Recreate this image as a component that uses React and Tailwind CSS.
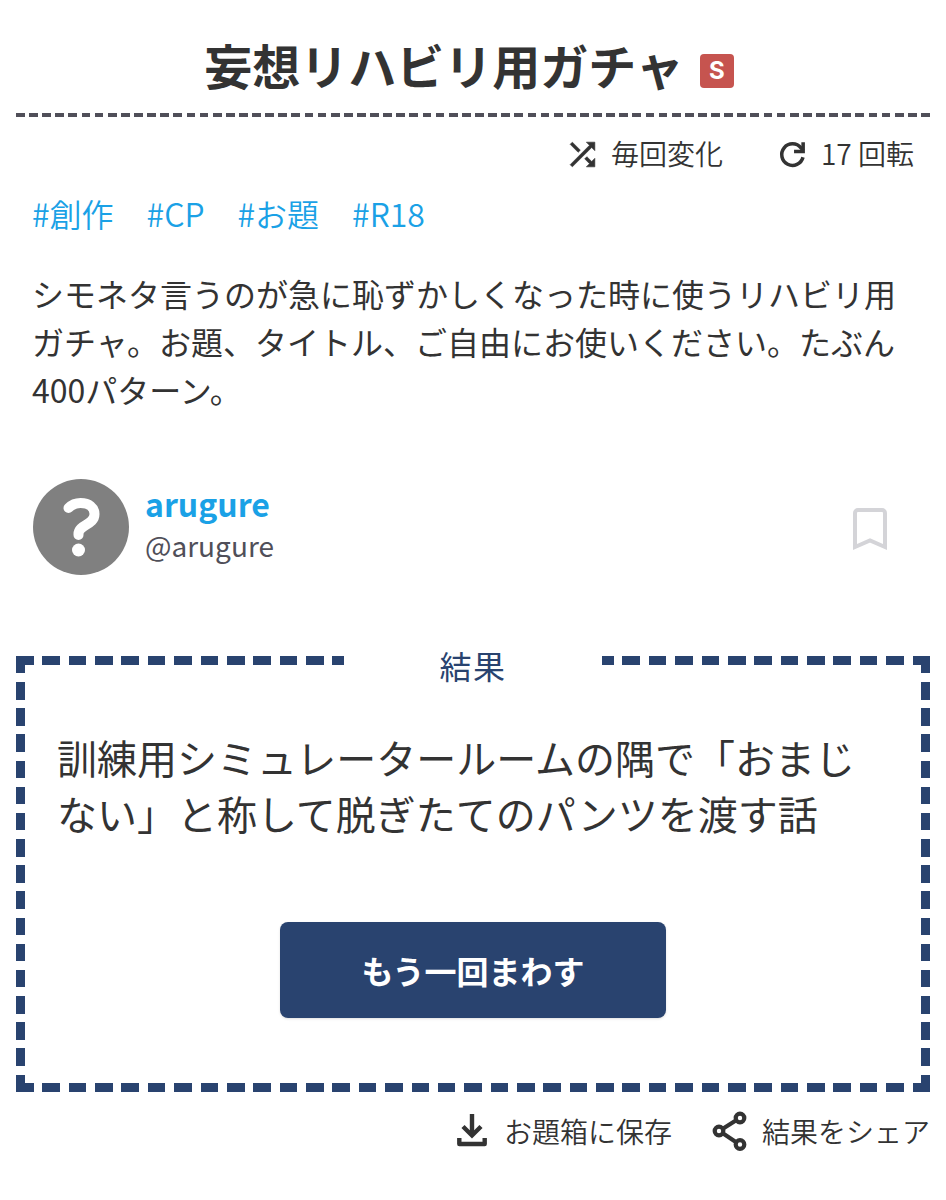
const tags = ["創作", "CP", "お題", "R18"];

const description =
  "シモネタ言うのが急に恥ずかしくなった時に使うリハビリ用ガチャ。お題、タイトル、ご自由にお使いください。たぶん400パターン。";

const result =
  "訓練用シミュレータールームの隅で「おまじない」と称して脱ぎたてのパンツを渡す話";

function ShuffleIcon() {
  return (
    <svg
      viewBox="0 0 24 24"
      className="mt-[3px] size-[37px]"
      fill="currentColor"
      stroke="currentColor"
      strokeWidth="0.4"
      aria-hidden="true"
    >
      <path d="M10.59 9.17 5.41 4 4 5.41l5.17 5.17 1.42-1.41zM14.5 4l2.04 2.04L4 18.59 5.41 20 17.96 7.46 20 9.5V4h-5.5zm.33 9.41-1.41 1.41 3.13 3.13L14.5 20H20v-5.5l-2.04 2.04-3.13-3.13z" />
    </svg>
  );
}

function RefreshIcon() {
  return (
    <svg
      viewBox="0 0 24 24"
      className="mt-[3px] size-[37px]"
      fill="none"
      stroke="currentColor"
      strokeWidth="2.3"
      aria-hidden="true"
    >
      <path d="M18.8 13.8A7 7 0 1 1 17.5 7.7L19 9.5" />
      <path d="M18.9 4V10.1H13" />
    </svg>
  );
}

function DownloadIcon() {
  return (
    <svg
      viewBox="0 0 32 40"
      className="h-10 w-8"
      fill="none"
      stroke="currentColor"
      strokeWidth="4.4"
      aria-hidden="true"
    >
      <path d="M16 3V25M7 15.5 16 24.5l9-9" />
      <path d="M3.3 27V33H28.7V27" strokeLinejoin="round" />
    </svg>
  );
}

function ShareIcon() {
  return (
    <svg
      viewBox="0 0 36 40"
      className="h-10 w-9"
      fill="none"
      stroke="currentColor"
      strokeWidth="4.2"
      aria-hidden="true"
    >
      <circle cx="7" cy="20" r="4.3" />
      <circle cx="28" cy="7" r="4.3" />
      <circle cx="28" cy="33.5" r="4.3" />
      <path d="M10.8 17.7 24.2 9.3M10.8 22.3 24.2 31.2" />
    </svg>
  );
}

function BookmarkIcon() {
  return (
    <svg
      viewBox="0 0 34 44"
      className="h-11 w-[34px]"
      fill="none"
      stroke="currentColor"
      strokeWidth="4"
      aria-hidden="true"
    >
      <path d="M2 40V6a3 3 0 0 1 3-3H29a3 3 0 0 1 3 3V40L17 33.5Z" />
    </svg>
  );
}

function Avatar() {
  return (
    <svg viewBox="0 0 96 96" className="size-24 shrink-0" role="img" aria-label="arugure">
      <circle cx="48" cy="48" r="48" fill="#808080" />
      <path
        d="M35.5 29C39 25.5 43 24 47.5 24C56 24 61.5 28.5 61.5 35C61.5 46.5 45.5 45 45.5 55V56"
        fill="none"
        stroke="#fff"
        strokeWidth="10"
        strokeLinecap="round"
      />
      <circle cx="45.5" cy="71" r="6.5" fill="#fff" />
    </svg>
  );
}

function Header() {
  return (
    <header>
      <h1 className="flex items-center justify-center gap-4 pr-2 text-[48px] leading-[72px] font-bold">
        妄想リハビリ用ガチャ
        <span className="mt-[14px] flex size-[34px] items-center justify-center rounded bg-[#c6544f] font-[Inter,sans-serif] text-[24px] leading-none text-white">
          S
        </span>
      </h1>
      <div className="mt-[13px] h-1 bg-[repeating-linear-gradient(90deg,#504f59_0_0.96%,transparent_0.96%_1.435%)]" />
    </header>
  );
}

function Stats() {
  return (
    <ul className="mt-4 flex justify-end gap-[51px] pr-4 text-[28px] leading-10 font-[350]">
      <li className="flex items-center gap-2.5">
        <ShuffleIcon />
        毎回変化
      </li>
      <li className="flex items-center gap-2.5">
        <RefreshIcon />
        17 回転
      </li>
    </ul>
  );
}

function Author() {
  return (
    <div className="mt-[66px] flex items-center px-[17px]">
      <Avatar />
      <div className="mb-2 ml-4 flex-1">
        <a href="#author" className="block text-[32px] leading-[44px] font-bold text-[#1aa1e6]">
          arugure
        </a>
        <p className="text-[28px] leading-10 text-[#504f59]">@arugure</p>
      </div>
      <button type="button" className="mt-1 mr-[26px] text-[#d4d4d8]" aria-label="ブックマーク">
        <BookmarkIcon />
      </button>
    </div>
  );
}

// The dashed frame is four gradient strips, so every side starts and ends on a full dash.
function ResultBox() {
  return (
    <section className="relative mt-[81px] bg-[repeating-linear-gradient(90deg,#29436f_0_1.92%,transparent_1.92%_2.885%),repeating-linear-gradient(90deg,#29436f_0_1.92%,transparent_1.92%_2.885%),repeating-linear-gradient(180deg,#29436f_0_4%,transparent_4%_6%),repeating-linear-gradient(180deg,#29436f_0_4%,transparent_4%_6%)] bg-size-[100%_9px,100%_9px,9px_100%,9px_100%] bg-position-[left_top,left_bottom,left_top,right_top] bg-no-repeat px-[41px] pt-[73px] pb-[74px]">
      <h2 className="absolute -top-[15px] left-1/2 w-[258px] -translate-x-1/2 bg-white text-center text-[32px] leading-[48px] tracking-wider text-[#29436f]">
        結果
      </h2>
      <p className="text-[40px] leading-[56px]">{result}</p>
      <button
        type="button"
        className="mx-auto mt-[81px] block h-24 w-[386px] rounded-lg bg-[#29436f] text-[32px] font-bold text-white shadow-sm"
      >
        もう一回まわす
      </button>
    </section>
  );
}

export default function App() {
  return (
    <main className="min-h-screen bg-white px-4 pt-7 pb-7 font-['Noto_Sans_CJK_JP',sans-serif] text-[#333]">
      <Header />
      <Stats />
      <nav className="mt-4 flex flex-wrap gap-[33px] px-4 text-[32px] leading-[48px] font-[350] text-[#1aa1e6]">
        {tags.map((tag) => (
          <a key={tag} href={`#${tag}`}>
            #{tag}
          </a>
        ))}
      </nav>
      <p className="mt-8 px-4 text-[32px] leading-[48px]">{description}</p>
      <Author />
      <ResultBox />
      <div className="mt-[19px] flex justify-end gap-10 text-[28px] leading-10 font-[350]">
        <button type="button" className="flex items-center gap-4">
          <DownloadIcon />
          お題箱に保存
        </button>
        <button type="button" className="flex items-center gap-3.5">
          <ShareIcon />
          結果をシェア
        </button>
      </div>
    </main>
  );
}
